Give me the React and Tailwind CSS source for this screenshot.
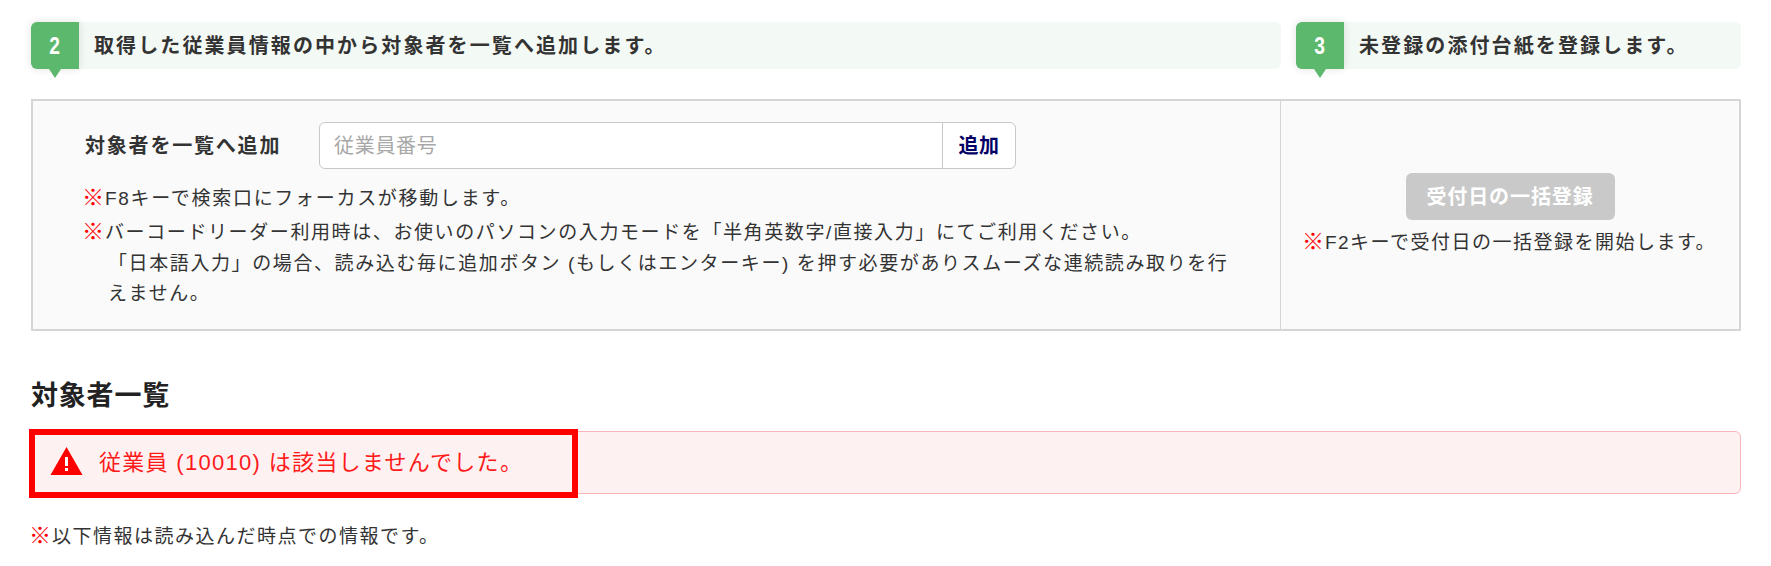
const font = { fontFamily: '"Liberation Sans", "Noto Sans CJK JP", sans-serif' };

function StepHeader({ num, text, className }) {
    return (
        <div className={`flex h-[47px] items-center rounded-md bg-[#f3f9f4] ${className}`}>
            <div className="relative flex h-[47px] w-[48px] shrink-0 items-center justify-center rounded-l-md bg-[#5cb86c] text-[24px] font-bold text-white shadow-[0_0_8px_rgba(0,0,0,0.12)]">
                <span className="inline-block scale-x-[0.8]">{num}</span>
                <span className="absolute top-full left-1/2 -ml-[6px] h-0 w-0 border-x-[6px] border-t-[9px] border-x-transparent border-t-[#5cb86c]" />
            </div>
            <div className="pl-[15px] text-[20px] font-bold tracking-[2.1px] text-[#333]">{text}</div>
        </div>
    );
}

function Mark() {
    return <span className="-ml-[2px] mr-[1px] text-[22px] leading-none font-black tracking-normal text-[#ff0000]">※</span>;
}

export default function App() {
    return (
        <div className="h-[566px] overflow-hidden bg-white pt-[22px] pr-[30px] pl-[31px] text-[#333]" style={font}>
            {/* steps */}
            <div className="flex gap-[15px]">
                <StepHeader num="2" text="取得した従業員情報の中から対象者を一覧へ追加します。" className="w-[1250px]" />
                <StepHeader num="3" text="未登録の添付台紙を登録します。" className="flex-1" />
            </div>

            {/* input panel */}
            <div className="mt-[30px] flex h-[232px] border-2 border-[#d5d5d5] bg-[#fafafa]">
                <div className="w-[1248px] shrink-0 border-r border-[#d5d5d5] pt-[21px] pl-[51px]">
                    <div className="flex items-center">
                        <div className="ml-[1px] w-[234px] text-[20px] font-bold tracking-[1.8px]">対象者を一覧へ追加</div>
                        <div className="flex h-[47px] w-[697px] overflow-hidden rounded-md border border-[#c8c8c8] bg-white">
                            <div className="flex flex-1 items-center pl-[14px] text-[20px] tracking-[0.7px] text-[#a8a8a8]">従業員番号</div>
                            <div className="flex w-[73px] items-center justify-center border-l border-[#c8c8c8] text-[20px] font-bold tracking-[0.6px] text-[#000066]">追加</div>
                        </div>
                    </div>
                    <div className="mt-[16px] text-[19px] leading-[28px] tracking-[1.7px]">
                        <Mark />F8キーで検索口にフォーカスが移動します。
                    </div>
                    <div className="mt-[5px] w-[1160px] pl-[24px] -indent-[24px] text-[19px] leading-[30.5px] tracking-[1.6px]">
                        <Mark />バーコードリーダー利用時は、お使いのパソコンの入力モードを「半角英数字/直接入力」にてご利用ください。
                        <br />「日本語入力」の場合、読み込む毎に追加ボタン (もしくはエンターキー) を押す必要がありスムーズな連続読み取りを行えません。
                    </div>
                </div>
                <div className="flex flex-1 flex-col items-center pt-[72px]">
                    <div className="flex h-[47px] w-[209px] items-center justify-center rounded-md bg-[#c9c9c9] text-[20px] font-bold tracking-[0.9px] text-white">受付日の一括登録</div>
                    <div className="mt-[9px] text-[19px] leading-[28px] tracking-[1.5px]">
                        <Mark />F2キーで受付日の一括登録を開始します。
                    </div>
                </div>
            </div>

            <h2 className="mt-[47px] text-[27px] leading-[36px] font-bold tracking-[0.8px] text-[#222]">対象者一覧</h2>

            {/* alert */}
            <div className="relative mt-[17px] flex h-[63px] items-center rounded-md border border-[#f5b5b9] bg-[#fef1f2] pl-[18px] text-[#ff1a1a]">
                <svg className="mb-[3px]" width="33" height="30" viewBox="0 0 33 30">
                    <path d="M16.5 1 L32.5 29 H0.5 Z" fill="#ff0000" />
                    <rect x="15" y="11" width="3" height="9" fill="#fff" />
                    <rect x="15" y="22" width="3" height="3" fill="#fff" />
                </svg>
                <span className="ml-[16px] text-[22px] tracking-[1.3px]">従業員 (10010) は該当しませんでした。</span>
                <div className="absolute -top-[3px] -left-[3px] h-[69px] w-[549px] border-[6px] border-[#ff0000]" />
            </div>

            <div className="mt-[29px] text-[19px] leading-[28px] tracking-[1.5px]">
                <Mark />以下情報は読み込んだ時点での情報です。
            </div>
        </div>
    );
}
